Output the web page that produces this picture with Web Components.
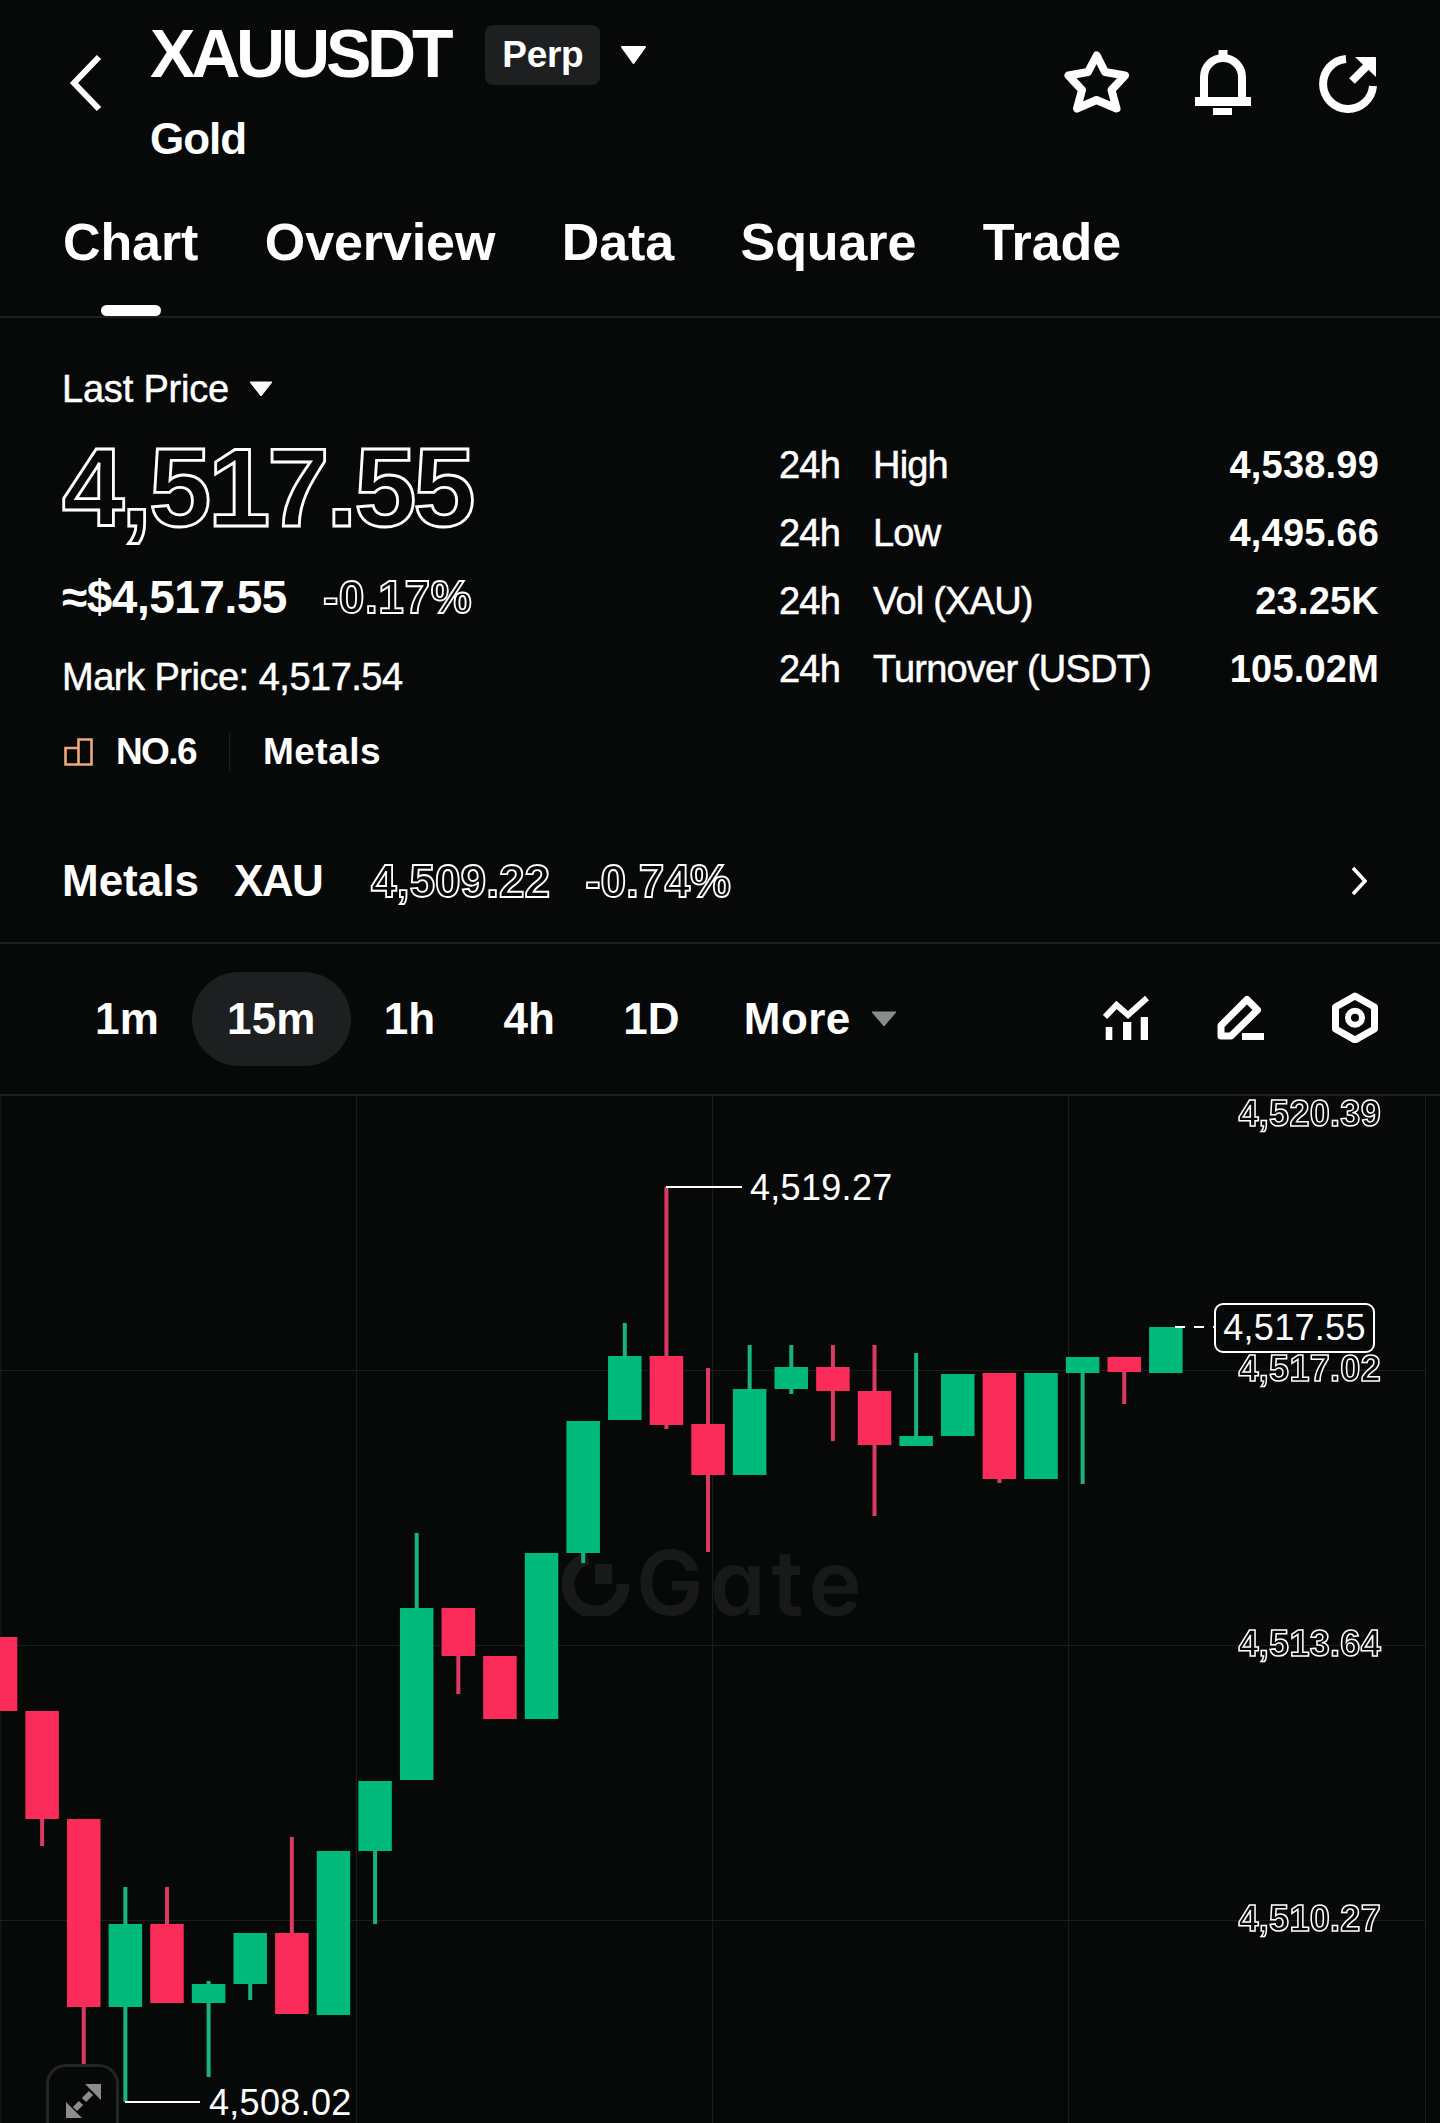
<!DOCTYPE html>
<html lang="en">
<head>
<meta charset="utf-8">
<title>XAUUSDT</title>
<style>
    html, body {
        margin: 0;
        padding: 0;
    }

    body {
        width: 1440px;
        height: 2123px;
        overflow: hidden;
        background: #070808;
        color: #fff;
        font-family: "Liberation Sans", Arial, sans-serif;
        --line: #1e1f20;
        --bg: #070808;
    }
</style>
</head>
<body>
<market-header>
    <span slot="symbol">XAUUSDT</span>
    <span slot="type">Perp</span>
    <span slot="name">Gold</span>
</market-header>

<tab-bar>
    <tab-item active>Chart</tab-item>
    <tab-item>Overview</tab-item>
    <tab-item>Data</tab-item>
    <tab-item>Square</tab-item>
    <tab-item>Trade</tab-item>
</tab-bar>

<price-panel>
    <stat-row><span slot="label">High</span>4,538.99</stat-row>
    <stat-row><span slot="label">Low</span>4,495.66</stat-row>
    <stat-row><span slot="label">Vol (XAU)</span>23.25K</stat-row>
    <stat-row><span slot="label">Turnover (USDT)</span>105.02M</stat-row>
</price-panel>

<sector-row></sector-row>

<interval-bar>
    <interval-item>1m</interval-item>
    <interval-item active>15m</interval-item>
    <interval-item>1h</interval-item>
    <interval-item>4h</interval-item>
    <interval-item>1D</interval-item>
</interval-bar>

<candle-chart></candle-chart>

<script>
class MarketHeader extends HTMLElement {
    constructor() {
        super();
        this.shadowDOM = this.attachShadow({mode: "open"});
        this.shadowDOM.innerHTML = `
            <style>
                :host {
                    display: flex;
                    height: 142px;
                    padding: 19px 62px 0 69px;
                }

                .back {
                    width: 34px;
                    height: 60px;
                    margin-top: 34px;
                    margin-right: 47px;
                }

                .title-row {
                    display: flex;
                    align-items: flex-start;
                    height: 68px;
                }

                .symbol {
                    font-size: 68px;
                    line-height: 68px;
                    font-weight: bold;
                    letter-spacing: -4.2px;
                }

                .badge {
                    margin: 6px 20px 0 36px;
                    width: 115px;
                    height: 60px;
                    border-radius: 8px;
                    background: #1e1f20;
                    font-size: 37px;
                    line-height: 60px;
                    font-weight: bold;
                    text-align: center;
                    letter-spacing: -0.3px;
                }

                .caret {
                    width: 27px;
                    height: 20px;
                    margin-top: 26px;
                }

                .name {
                    margin-top: 30px;
                    font-size: 44px;
                    line-height: 44px;
                    font-weight: bold;
                    letter-spacing: -1px;
                }

                .actions {
                    display: flex;
                    align-items: center;
                    gap: 66px;
                    height: 66px;
                    margin-top: 30px;
                    margin-left: auto;
                }

                .bell {
                    margin-right: 2px;
                }

                .share {
                    margin-top: 4px;
                }
            </style>
            <svg class="back" viewBox="0 0 34 60"><path d="M30 4 L5 30 L30 56" fill="none" stroke="#fff" stroke-width="6"/></svg>
            <div>
                <div class="title-row">
                    <div class="symbol"><slot name="symbol"></slot></div>
                    <div class="badge"><slot name="type"></slot></div>
                    <svg class="caret" viewBox="0 0 27 20"><path d="M2 2 H25 L13.5 18 Z" fill="#fff" stroke="#fff" stroke-width="2" stroke-linejoin="round"/></svg>
                </div>
                <div class="name"><slot name="name"></slot></div>
            </div>
            <div class="actions">
                <svg width="65" height="62" viewBox="0 0 65 62"><path d="M32.7 4.5 L41 21 L61 24.5 L47.5 39 L52.5 57.5 L32.5 49 L13 57.5 L18 39 L4.5 24.5 L24 21 Z" fill="none" stroke="#fff" stroke-width="8" stroke-linejoin="round"/></svg>
                <svg class="bell" width="56" height="65" viewBox="0 0 56 65"><path d="M9 48 V27 A19 19 0 0 1 47 27 V48" fill="none" stroke="#fff" stroke-width="8"/><path d="M23.5 0 H32.5 V7 H23.5 Z M0 47 H56 V56 H0 Z M18 58 H37 V65 H18 Z" fill="#fff"/></svg>
                <svg class="share" width="59" height="58" viewBox="0 0 59 58"><path d="M27 4 A25 25 0 1 0 54 31" fill="none" stroke="#fff" stroke-width="8"/><path d="M33 26 L48 11" fill="none" stroke="#fff" stroke-width="8"/><path d="M36 2 H56 A1 1 0 0 1 57 3 V22 Z" fill="#fff"/></svg>
            </div>`;
    }
}

class TabBar extends HTMLElement {
    constructor() {
        super();
        this.shadowDOM = this.attachShadow({mode: "open"});
        this.shadowDOM.innerHTML = `
            <style>
                :host {
                    display: flex;
                    gap: 66.5px;
                    padding: 55px 0 0 63px;
                    height: 100px;
                    border-bottom: 2px solid var(--line);
                }
            </style>
            <slot></slot>`;
    }
}

class TabItem extends HTMLElement {
    constructor() {
        super();
        this.shadowDOM = this.attachShadow({mode: "open"});
        this.shadowDOM.innerHTML = `
            <style>
                :host {
                    display: block;
                    font-size: 52px;
                    line-height: 52px;
                    font-weight: bold;
                    letter-spacing: -0.1px;
                }

                :host([active])::after {
                    content: "";
                    display: block;
                    width: 60px;
                    height: 11px;
                    margin: 37px auto 0;
                    border-radius: 6px;
                    background: #fff;
                }
            </style>
            <slot></slot>`;
    }
}

class PricePanel extends HTMLElement {
    constructor() {
        super();
        this.shadowDOM = this.attachShadow({mode: "open"});
        this.shadowDOM.innerHTML = `
            <style>
                :host {
                    display: flex;
                    justify-content: space-between;
                    height: 401px;
                    padding: 52px 61px 0 62px;
                }

                .label {
                    display: flex;
                    align-items: center;
                    gap: 20px;
                    font-size: 38px;
                    line-height: 38px;
                    letter-spacing: -0.2px;
                    -webkit-text-stroke: 0.5px #fff;
                }

                .last {
                    margin-top: 24px;
                    font-size: 112px;
                    line-height: 112px;
                    font-weight: bold;
                    letter-spacing: -3.2px;
                    color: var(--bg);
                    -webkit-text-stroke: 2.8px #fff;
                    will-change: opacity;
                }

                .sub {
                    display: flex;
                    gap: 36px;
                    margin-top: 30px;
                    font-size: 46px;
                    line-height: 46px;
                    font-weight: bold;
                    letter-spacing: -0.5px;
                }

                .change {
                    letter-spacing: 0.6px;
                    color: var(--bg);
                    -webkit-text-stroke: 1.8px #fff;
                    will-change: opacity;
                }

                .mark {
                    margin-top: 38px;
                    font-size: 38px;
                    line-height: 38px;
                    letter-spacing: -0.5px;
                    -webkit-text-stroke: 0.5px #fff;
                }

                .rank {
                    display: flex;
                    align-items: center;
                    margin-top: 37px;
                    font-size: 37px;
                    line-height: 38px;
                    font-weight: bold;
                }

                .rank svg {
                    margin: 0 23px 0 2px;
                }

                .no {
                    letter-spacing: -1.6px;
                }

                .sep {
                    width: 1px;
                    height: 38px;
                    margin: 0 33px;
                    background: var(--line);
                }

                .sector {
                    letter-spacing: 0.5px;
                }

                .stats {
                    width: 600px;
                    margin-top: 76px;
                    display: flex;
                    flex-direction: column;
                    gap: 30px;
                }
            </style>
            <div>
                <div class="label">Last Price <svg width="24" height="16" viewBox="0 0 24 16"><path d="M1 1 H23 L12 15 Z" fill="#fff" stroke="#fff" stroke-linejoin="round"/></svg></div>
                <div class="last">4,517.55</div>
                <div class="sub"><span>≈$4,517.55</span><span class="change">-0.17%</span></div>
                <div class="mark">Mark Price: 4,517.54</div>
                <div class="rank">
                    <svg width="29" height="28" viewBox="0 0 29 28"><path d="M1.5 10 H14.5 V26.5 H1.5 Z M14.5 1.5 H27.5 V26.5 H14.5 Z" fill="none" stroke="#f0a878" stroke-width="2.6"/></svg>
                    <span class="no">NO.6</span>
                    <span class="sep"></span>
                    <span class="sector">Metals</span>
                </div>
            </div>
            <div class="stats"><slot></slot></div>`;
    }
}

class StatRow extends HTMLElement {
    constructor() {
        super();
        this.shadowDOM = this.attachShadow({mode: "open"});
        this.shadowDOM.innerHTML = `
            <style>
                :host {
                    display: grid;
                    grid-template-columns: 94px 1fr auto;
                    font-size: 38px;
                    line-height: 38px;
                }

                .label {
                    letter-spacing: -0.8px;
                    -webkit-text-stroke: 0.5px #fff;
                }

                .value {
                    font-weight: bold;
                    letter-spacing: 0.2px;
                }
            </style>
            <span class="label">24h</span>
            <span class="label"><slot name="label"></slot></span>
            <span class="value"><slot></slot></span>`;
    }
}

class SectorRow extends HTMLElement {
    constructor() {
        super();
        this.shadowDOM = this.attachShadow({mode: "open"});
        this.shadowDOM.innerHTML = `
            <style>
                :host {
                    display: flex;
                    align-items: center;
                    height: 44px;
                    padding: 88px 73px 39px 62px;
                    border-bottom: 2px solid var(--line);
                    font-size: 44px;
                    line-height: 44px;
                    font-weight: bold;
                }

                .name {
                    margin-right: 35px;
                }

                .code {
                    margin-right: 49px;
                    letter-spacing: -1.6px;
                }

                .line {
                    font-size: 46px;
                    color: var(--bg);
                    -webkit-text-stroke: 1.8px #fff;
                    letter-spacing: 0;
                    will-change: opacity;
                }

                .price {
                    margin-right: 35px;
                }

                svg {
                    margin-left: auto;
                }
            </style>
            <span class="name">Metals</span>
            <span class="code">XAU</span>
            <span class="line price">4,509.22</span>
            <span class="line">-0.74%</span>
            <svg width="16" height="30" viewBox="0 0 16 30"><path d="M2 2 L14 15 L2 28" fill="none" stroke="#fff" stroke-width="3.5"/></svg>`;
    }
}

class IntervalBar extends HTMLElement {
    constructor() {
        super();
        this.shadowDOM = this.attachShadow({mode: "open"});
        this.shadowDOM.innerHTML = `
            <style>
                :host {
                    display: flex;
                    align-items: center;
                    height: 94px;
                    padding: 28px 62px 28px 61px;
                    border-bottom: 2px solid var(--line);
                }

                .more {
                    display: flex;
                    align-items: center;
                    gap: 20px;
                    margin-left: 30px;
                    font-size: 44px;
                    font-weight: bold;
                    letter-spacing: 0.4px;
                }

                .tools {
                    display: flex;
                    align-items: center;
                    gap: 67px;
                    margin: -4px 0 0 auto;
                }
            </style>
            <slot></slot>
            <div class="more">More <svg width="26" height="16" viewBox="0 0 26 16"><path d="M1 1 H25 L13 15 Z" fill="#8a8b8c" stroke="#8a8b8c" stroke-linejoin="round"/></svg></div>
            <div class="tools">
                <svg width="47" height="45" viewBox="0 0 47 45"><path d="M2 22 L13.5 10 L25 20 L44 3" fill="none" stroke="#fff" stroke-width="6"/><path d="M2.7 32 H9.3 V45 H2.7 Z M20 27 H28.3 V45 H20 Z M37.7 22 H45 V45 H37.7 Z" fill="#fff"/></svg>
                <svg width="48" height="46" viewBox="0 0 48 46"><path d="M30 5.5 L40.5 16 L14 42 H4 V31.5 Z" fill="none" stroke="#fff" stroke-width="7" stroke-linejoin="round"/><path d="M25 39 H47 V46 H25 Z" fill="#fff"/></svg>
                <svg width="46" height="51" viewBox="0 0 46 51"><path d="M23 4 L42.5 15 V37 L23 48 L3.5 37 V15 Z" fill="none" stroke="#fff" stroke-width="7" stroke-linejoin="round"/><circle cx="23" cy="25.7" r="7" fill="none" stroke="#fff" stroke-width="6"/></svg>
            </div>`;
    }
}

class IntervalItem extends HTMLElement {
    constructor() {
        super();
        this.shadowDOM = this.attachShadow({mode: "open"});
        this.shadowDOM.innerHTML = `
            <style>
                :host {
                    display: block;
                    padding: 0 34px;
                    font-size: 44px;
                    line-height: 94px;
                    font-weight: bold;
                    letter-spacing: 0.2px;
                }

                :host([active]) {
                    padding: 0 35px;
                    margin: 0 -1px;
                    border-radius: 47px;
                    background: #1e1f20;
                }
            </style>
            <slot></slot>`;
    }
}

// x of candle i, and all y values below are page pixels
const candles = [
    ["r", 1637, 1711],
    ["r", 1711, 1819, null, 1846],
    ["r", 1819, 2007, null, 2070],
    ["g", 1924, 2007, 1887, 2102],
    ["r", 1924, 2003, 1887],
    ["g", 1984, 2003, 1981, 2077],
    ["g", 1933, 1984, null, 2000],
    ["r", 1933, 2014, 1837],
    ["g", 1851, 2015],
    ["g", 1781, 1851, null, 1924],
    ["g", 1608, 1780, 1533],
    ["r", 1608, 1656, null, 1694],
    ["r", 1656, 1719],
    ["g", 1553, 1719],
    ["g", 1421, 1553, null, 1563],
    ["g", 1356, 1420, 1323],
    ["r", 1356, 1425, 1187, 1429],
    ["r", 1424, 1475, 1368, 1552],
    ["g", 1389, 1475, 1345],
    ["g", 1367, 1389, 1345, 1394],
    ["r", 1367, 1391, 1345, 1441],
    ["r", 1391, 1445, 1345, 1516],
    ["g", 1436, 1446, 1353],
    ["g", 1374, 1436],
    ["r", 1373, 1479, null, 1483],
    ["g", 1373, 1479],
    ["g", 1357, 1373, null, 1484],
    ["r", 1357, 1372, null, 1404],
    ["g", 1327, 1373]
];

class CandleChart extends HTMLElement {
    constructor() {
        super();
        this.shadowDOM = this.attachShadow({mode: "open"});
    }

    connectedCallback() {
        this.render();
    }

    drawGrid() {
        const xs = [1, 356.5, 712.5, 1068.5, 1425.5];
        const ys = [1370.5, 1645.5, 1920.5];
        return xs.map(x => `<path d="M${x} 1096 V2123" stroke="#1c1d1e"/>`).join("")
            + ys.map(y => `<path d="M0 ${y} H1425" stroke="#1c1d1e"/>`).join("");
    }

    drawCandles() {
        return candles.map(([kind, top, bottom, wickTop, wickBottom], i) => {
            const x = 0.5 + 41.62 * i;
            const body = kind === "g" ? "#00ba7c" : "#fb2b5a";
            const wick = kind === "g" ? "#17b382" : "#dd3a63";
            return `<path d="M${x} ${wickTop || top} V${wickBottom || bottom}" stroke="${wick}" stroke-width="4"/>`
                + `<rect x="${x - 16.75}" y="${top}" width="33.5" height="${bottom - top}" fill="${body}"/>`;
        }).join("");
    }

    render() {
        this.shadowDOM.innerHTML = `
            <style>
                :host {
                    display: block;
                    position: relative;
                    height: 1027px;
                }

                svg.plot {
                    position: absolute;
                    left: 0;
                    top: 0;
                }

                .watermark {
                    position: absolute;
                    left: 560px;
                    top: 454px;
                    display: flex;
                    align-items: center;
                    gap: 5px;
                    color: #18191a;
                    font-family: Inter, "Liberation Sans", sans-serif;
                    font-size: 90px;
                    line-height: 66px;
                    font-weight: 600;
                    letter-spacing: 6px;
                    font-feature-settings: "cv11";
                }

                .price {
                    position: absolute;
                    font-size: 36px;
                    line-height: 36px;
                    letter-spacing: 0.3px;
                }

                .axis {
                    right: 59px;
                    font-weight: bold;
                    color: var(--bg);
                    -webkit-text-stroke: 1.5px #fff;
                    will-change: opacity;
                }

                .tag {
                    left: 1214px;
                    top: 207px;
                    box-sizing: border-box;
                    width: 161px;
                    height: 50px;
                    border: 2px solid #fff;
                    border-radius: 9px;
                    background: var(--bg);
                    line-height: 46px;
                    text-align: center;
                }

                .full {
                    position: absolute;
                    left: 46px;
                    top: 968px;
                    box-sizing: border-box;
                    width: 73px;
                    height: 59px;
                    border: 3px solid #232425;
                    border-bottom: 0;
                    border-radius: 20px 20px 0 0;
                    background: var(--bg);
                }

                .full svg {
                    display: block;
                    margin: 16px 0 0 16px;
                }
            </style>
            <div class="watermark"><svg width="71" height="66" viewBox="0 0 71 66"><path d="M28 8 A27.5 27.5 0 1 0 63 34" fill="none" stroke="#18191a" stroke-width="13"/><path d="M35 14 H52 V34 H35 Z" fill="#18191a"/></svg><span>Gate</span></div>
            <svg class="plot" width="1440" height="1027" viewBox="0 1096 1440 1027">
                ${this.drawGrid()}
                ${this.drawCandles()}
                <path d="M666 1187 H742 M125 2102 H200" stroke="#fff" stroke-width="2" fill="none"/>
                <path d="M1175 1327 H1214" stroke="#fff" stroke-width="2" stroke-dasharray="10 9"/>
            </svg>
            <span class="price axis" style="top: 0">4,520.39</span>
            <span class="price axis" style="top: 255px">4,517.02</span>
            <span class="price axis" style="top: 530px">4,513.64</span>
            <span class="price axis" style="top: 805px">4,510.27</span>
            <span class="price tag">4,517.55</span>
            <span class="price" style="left: 750px; top: 74px">4,519.27</span>
            <span class="price" style="left: 209px; top: 989px">4,508.02</span>
            <div class="full"><svg width="36" height="36" viewBox="0 0 36 36"><path d="M20 1 H36 V17 Z M1 19 V35 H17 Z" fill="#8c8c8c"/><path d="M26 10 L19 17 M10 26 L16 20" stroke="#8c8c8c" stroke-width="6"/></svg></div>`;
    }
}

customElements.define("market-header", MarketHeader);
customElements.define("tab-bar", TabBar);
customElements.define("tab-item", TabItem);
customElements.define("price-panel", PricePanel);
customElements.define("stat-row", StatRow);
customElements.define("sector-row", SectorRow);
customElements.define("interval-bar", IntervalBar);
customElements.define("interval-item", IntervalItem);
customElements.define("candle-chart", CandleChart);
</script>
</body>
</html>
